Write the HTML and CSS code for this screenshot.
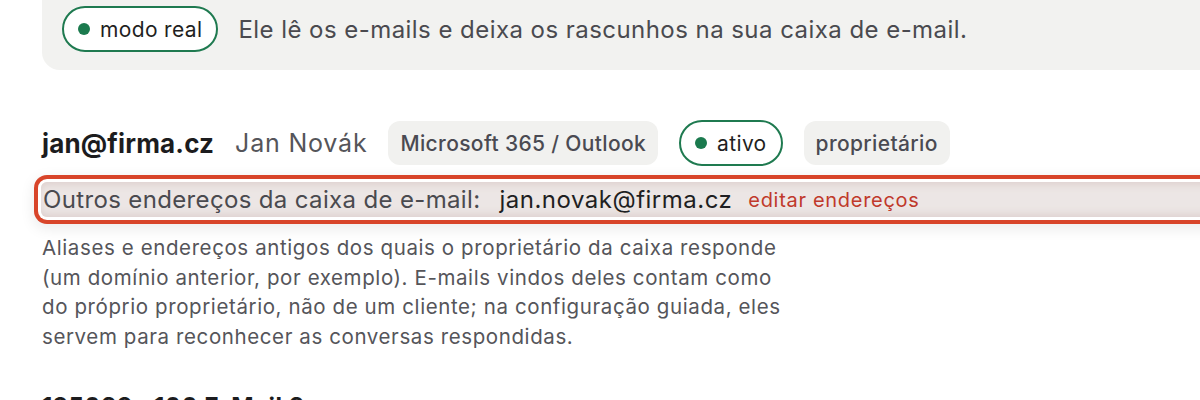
FILE: index.html
```html
<!DOCTYPE html>
<html lang="pt">
<head>
<meta charset="utf-8">
<link rel="stylesheet" href="styles.css">
</head>
<body>
<div class="page">
  <div class="mode-panel">
    <span class="pill"><span class="dot"></span>modo real</span>
    <span class="mode-text">Ele lê os e-mails e deixa os rascunhos na sua caixa de e-mail.</span>
  </div>

  <div class="account">
    <div class="account-head">
      <span class="email">jan@firma.cz</span>
      <span class="name">Jan Novák</span>
      <span class="chip">Microsoft 365 / Outlook</span>
      <span class="pill"><span class="dot"></span>ativo</span>
      <span class="chip">proprietário</span>
    </div>
    <div class="aliases">
      <span class="aliases-label">Outros endereços da caixa de e-mail:</span>
      <span class="aliases-value">jan.novak@firma.cz</span>
      <a class="aliases-edit">editar endereços</a>
    </div>
    <p class="help">Aliases e endereços antigos dos quais o proprietário da caixa responde (um domínio anterior, por exemplo). E-mails vindos deles contam como do próprio proprietário, não de um cliente; na configuração guiada, eles servem para reconhecer as conversas respondidas.</p>
    <div class="next-title">125039 · 100 E-Mail 3</div>
  </div>
</div>
</body>
</html>
```
FILE: styles.css
```css
html, body {
  margin: 0;
  padding: 0;
  background: #ffffff;
  overflow: hidden;
}
body {
  font-family: Inter, "Noto Sans", sans-serif;
  color: #4a4a4f;
  width: 1200px;
  height: 400px;
}
.page {
  padding-left: 42px;
}
.mode-panel {
  background: #f2f2f0;
  border-radius: 0 0 0 18px;
  margin-right: -40px;
  padding: 6px 0 18px 20px;
  display: flex;
  align-items: center;
  gap: 20px;
}
.pill {
  display: inline-flex;
  align-items: center;
  gap: 10px;
  height: 46px;
  box-sizing: border-box;
  padding: 0 14px;
  border: 2px solid #1f7a50;
  border-radius: 999px;
  background: #ffffff;
  color: #1f1f22;
  font-size: 21px;
  letter-spacing: 0.35px;
}
.dot {
  width: 12px;
  height: 12px;
  border-radius: 50%;
  background: #1b7a4e;
}
.mode-text {
  font-size: 24px;
  letter-spacing: 0.45px;
  color: #4a4a4f;
}
.account {
  padding-top: 50px;
}
.account-head {
  display: flex;
  align-items: center;
  gap: 21px;
}
.email {
  font-weight: 700;
  font-size: 26px;
  color: #1c1c1e;
  letter-spacing: 0.15px;
}
.name {
  font-size: 25px;
  letter-spacing: 0.8px;
  color: #55555a;
}
.chip {
  display: inline-flex;
  align-items: center;
  height: 44px;
  padding: 0 12px;
  border-radius: 12px;
  background: #f1f1ef;
  font-size: 21px;
  letter-spacing: 0.35px;
  font-weight: 500;
  color: #4a4a52;
}
.aliases {
  margin-top: 16px;
  margin-left: -1px;
  margin-right: -60px;
  height: 35px;
  padding-left: 2px;
  display: flex;
  align-items: center;
  border-radius: 6px;
  background: #ece6e5;
  box-shadow: inset 0 6px 8px -4px #dccdcb, inset 0 -6px 8px -4px #dccdcb,
    0 0 0 3px #ffffff, 0 0 0 7px #d8452a, 0 4px 14px 8px rgba(0,0,0,0.08);
}
.aliases-label {
  font-size: 24px;
  letter-spacing: 0.35px;
  color: #4a4a4f;
}
.aliases-value {
  font-size: 24px;
  letter-spacing: 0.5px;
  color: #1f1f22;
  margin-left: 19px;
}
.aliases-edit {
  font-size: 20px;
  letter-spacing: 0.7px;
  color: #c0392b;
  margin-left: 16px;
}
.help {
  margin: 16px 0 0 0;
  width: 745px;
  font-size: 20.5px;
  letter-spacing: 0.6px;
  line-height: 29.5px;
  color: #55555a;
}
.next-title {
  margin-top: 41px;
  font-size: 24px;
  font-weight: 700;
  letter-spacing: 0.5px;
  color: #1c1c1e;
}
```
